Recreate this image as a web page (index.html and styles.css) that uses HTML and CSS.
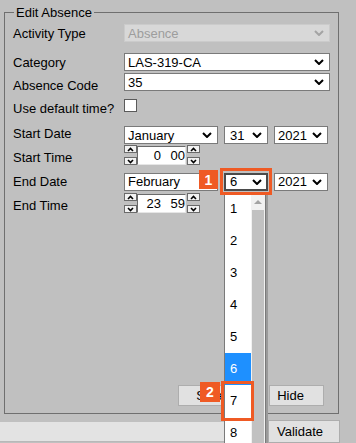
FILE: index.html
```html
<!DOCTYPE html>
<html lang="en">
<head>
    <meta charset="UTF-8">
    <meta name="viewport" content="width=device-width, initial-scale=1.0">
    <title>Edit Absence</title>
    <link rel="stylesheet" href="styles.css">
</head>
<body>

<fieldset class="panel">
    <legend>Edit Absence</legend>

    <div class="row r1">
        <span class="label">Activity Type</span>
        <div class="select wide disabled"><span>Absence</span><svg width="10" height="6" viewBox="0 0 10 6"><path d="M1 1l4 4 4-4" /></svg></div>
    </div>
    <div class="row r2">
        <span class="label">Category</span>
        <div class="select wide"><span>LAS-319-CA</span><svg width="10" height="6" viewBox="0 0 10 6"><path d="M1 1l4 4 4-4" /></svg></div>
    </div>
    <div class="row r3">
        <span class="label drop3">Absence Code</span>
        <div class="select wide"><span>35</span><svg width="10" height="6" viewBox="0 0 10 6"><path d="M1 1l4 4 4-4" /></svg></div>
    </div>
    <div class="row r4">
        <span class="label drop3">Use default time?</span>
        <div class="checkbox"></div>
    </div>
    <div class="row r5">
        <span class="label rise">Start Date</span>
        <div class="dates">
            <div class="select month"><span>January</span><svg width="10" height="6" viewBox="0 0 10 6"><path d="M1 1l4 4 4-4" /></svg></div>
            <div class="select day"><span>31</span><svg width="10" height="6" viewBox="0 0 10 6"><path d="M1 1l4 4 4-4" /></svg></div>
            <div class="select year"><span>2021</span><svg width="10" height="6" viewBox="0 0 10 6"><path d="M1 1l4 4 4-4" /></svg></div>
        </div>
    </div>
    <div class="row r6">
        <span class="label drop2">Start Time</span>
        <div class="time">
            <div class="spin">
                <div class="spin-btn"><svg width="7" height="5" viewBox="0 0 7 5"><path d="M1 4l2.5-2.5L6 4" /></svg></div>
                <div class="spin-btn"><svg width="7" height="5" viewBox="0 0 7 5"><path d="M1 1l2.5 2.5L6 1" /></svg></div>
            </div>
            <div class="time-box"><span class="hh">0</span><span class="mm">00</span></div>
            <div class="spin">
                <div class="spin-btn"><svg width="7" height="5" viewBox="0 0 7 5"><path d="M1 4l2.5-2.5L6 4" /></svg></div>
                <div class="spin-btn"><svg width="7" height="5" viewBox="0 0 7 5"><path d="M1 1l2.5 2.5L6 1" /></svg></div>
            </div>
        </div>
    </div>
    <div class="row r7">
        <span class="label">End Date</span>
        <div class="dates">
            <div class="select month"><span>February</span><svg width="10" height="6" viewBox="0 0 10 6"><path d="M1 1l4 4 4-4" /></svg></div>
            <div class="select day focus"><span>6</span><svg width="10" height="6" viewBox="0 0 10 6"><path d="M1 1l4 4 4-4" /></svg></div>
            <div class="select year"><span>2021</span><svg width="10" height="6" viewBox="0 0 10 6"><path d="M1 1l4 4 4-4" /></svg></div>
        </div>
    </div>
    <div class="row r8">
        <span class="label drop2">End Time</span>
        <div class="time">
            <div class="spin">
                <div class="spin-btn"><svg width="7" height="5" viewBox="0 0 7 5"><path d="M1 4l2.5-2.5L6 4" /></svg></div>
                <div class="spin-btn"><svg width="7" height="5" viewBox="0 0 7 5"><path d="M1 1l2.5 2.5L6 1" /></svg></div>
            </div>
            <div class="time-box"><span class="hh">23</span><span class="mm">59</span></div>
            <div class="spin">
                <div class="spin-btn"><svg width="7" height="5" viewBox="0 0 7 5"><path d="M1 4l2.5-2.5L6 4" /></svg></div>
                <div class="spin-btn"><svg width="7" height="5" viewBox="0 0 7 5"><path d="M1 1l2.5 2.5L6 1" /></svg></div>
            </div>
        </div>
    </div>

    <div class="actions">
        <button class="btn save">Save</button>
        <button class="btn hide">Hide</button>
    </div>
</fieldset>

<div class="footer">
    <div class="strip"></div>
    <button class="btn validate">Validate</button>
</div>

<!-- open day list of End Date -->
<div class="popup">
    <ul class="options">
        <li>1</li>
        <li>2</li>
        <li>3</li>
        <li>4</li>
        <li>5</li>
        <li class="selected">6</li>
        <li>7</li>
        <li>8</li>
    </ul>
    <div class="scrollbar">
        <div class="sb-arrow"><svg width="8" height="5" viewBox="0 0 8 5"><path d="M0 5L4 1l4 4z" /></svg></div>
        <div class="sb-thumb"></div>
    </div>
</div>

<!-- annotation marks -->
<div class="mark mark-1"></div>
<div class="badge badge-1">1</div>
<div class="mark mark-2"></div>
<div class="badge badge-2">2</div>

</body>
</html>
```

FILE: styles.css
```css
/* page */
body { margin: 0; background: #c0c0c0; font-family: "Liberation Sans", Arial, sans-serif; font-size: 13px; color: #000; position: relative; height: 443px; overflow: hidden; }

.panel { box-sizing: border-box; width: 335px; margin: 5px 0 0 4px; padding: 0 0 7px 8px; border: 1px solid #6f6f6f; min-width: 0; }
.panel legend { margin-left: 1px; padding: 0 2px; line-height: 15px; }

/* form rows */
.row { display: flex; align-items: center; }
.r1 { margin-top: 4px; height: 18px; }
.r2 { margin-top: 11px; height: 18px; }
.r3 { margin-top: 2px; height: 18px; }
.r4 { margin-top: 6px; height: 16px; }
.r5 { margin-top: 13px; height: 18px; }
.r6 { height: 22px; }
.r7 { margin-top: 6px; height: 19px; }
.r8 { margin-top: 2px; height: 20px; }

.label { width: 111px; flex: none; line-height: 15px; white-space: nowrap; }
.label.drop3 { padding-top: 6px; }
.label.drop2 { padding-top: 4px; }
.label.rise { padding-bottom: 3px; }

/* select boxes */
.select { box-sizing: border-box; height: 18px; display: flex; align-items: center; justify-content: space-between; padding: 0 5px 0 3px; background: #fff; border: 1px solid #7a7a7a; white-space: nowrap; overflow: hidden; }
.select svg { flex: none; }
.select path { fill: none; stroke: #000; stroke-width: 2; }
.select.wide { width: 206px; }
.select.disabled { background: #d8d8d8; border-color: #cbcbcb; color: #9d9d9d; }
.select.disabled path { stroke: #a4a4a4; }
.select.focus { border: 2px solid #4a4a4a; padding: 0 4px 0 2px; }

.dates { display: flex; gap: 6px; }
.select.month { width: 94px; }
.select.day { width: 44px; padding-left: 5px; }
.select.day.focus { padding-left: 4px; }
.select.year { width: 54px; }

.checkbox { width: 13px; height: 13px; box-sizing: border-box; background: #fff; border: 1px solid #5a5a5a; }

/* time spinners */
.time { display: flex; align-items: center; }
.spin { display: flex; flex-direction: column; gap: 4px; }
.spin-btn { box-sizing: border-box; width: 13px; height: 8px; display: flex; align-items: center; justify-content: center; background: #f2f2f2; border: 1px solid #6a6a6a; }
.spin-btn path { fill: none; stroke: #000; stroke-width: 1.6; }
.time-box { box-sizing: border-box; width: 49px; height: 19px; margin-right: 1px; display: flex; align-items: center; background: #fff; border-top: 1px solid #6a6a6a; border-left: 1px solid #6a6a6a; border-right: 1px solid #e6e6e6; border-bottom: 1px solid #e6e6e6; }
.time-box .hh { width: 23px; text-align: right; }
.time-box .mm { width: 15px; margin-left: 9px; text-align: right; }

/* buttons */
.btn { box-sizing: border-box; height: 21px; padding: 0; background: #e1e1e1; border: 1px solid #adadad; font-family: inherit; font-size: 13px; color: #000; }
.actions { display: flex; justify-content: flex-end; gap: 25px; margin-top: 172px; padding-right: 14px; }
.save { width: 66px; }
.hide { width: 55px; padding-right: 12px; }

.footer { display: flex; margin-top: 6px; padding-right: 16px; }
.strip { flex: 1; height: 19px; margin-top: 2px; margin-right: 3px; background: #e3e3e3; border-bottom: 1px solid #b8b8b8; }
.validate { width: 72px; height: 23px; padding-right: 8px; }

/* dropdown list */
.popup { position: absolute; left: 224px; top: 192px; width: 42px; height: 251px; box-sizing: border-box; display: flex; background: #fff; border: 1px solid #7a7a7a; border-bottom: 0; box-shadow: 2px 0 0 #9a9a9a; overflow: hidden; }
.options { list-style: none; margin: 0; padding: 0; width: 26px; }
.options li { height: 32px; line-height: 32px; padding-left: 5px; }
.options li.selected { background: #1e90ff; color: #fff; }
.scrollbar { width: 14px; display: flex; flex-direction: column; background: #f1f1f1; }
.sb-arrow { height: 17px; display: flex; align-items: center; justify-content: center; }
.sb-arrow path { fill: #a3a3a3; }
.sb-thumb { flex: 1; margin: 0 1px; background: #c1c1c1; }

/* orange annotation marks */
.mark { position: absolute; box-sizing: border-box; border: 3px solid #ef5a24; }
.mark-1 { left: 220px; top: 168px; width: 52px; height: 27px; }
.mark-2 { left: 221px; top: 381px; width: 33px; height: 40px; }
.badge { position: absolute; display: flex; align-items: center; justify-content: center; background: #ef5a24; color: #fff; font-weight: bold; font-size: 14px; }
.badge-1 { left: 199px; top: 170px; width: 19px; height: 19px; }
.badge-2 { left: 200px; top: 382px; width: 20px; height: 20px; }
```
